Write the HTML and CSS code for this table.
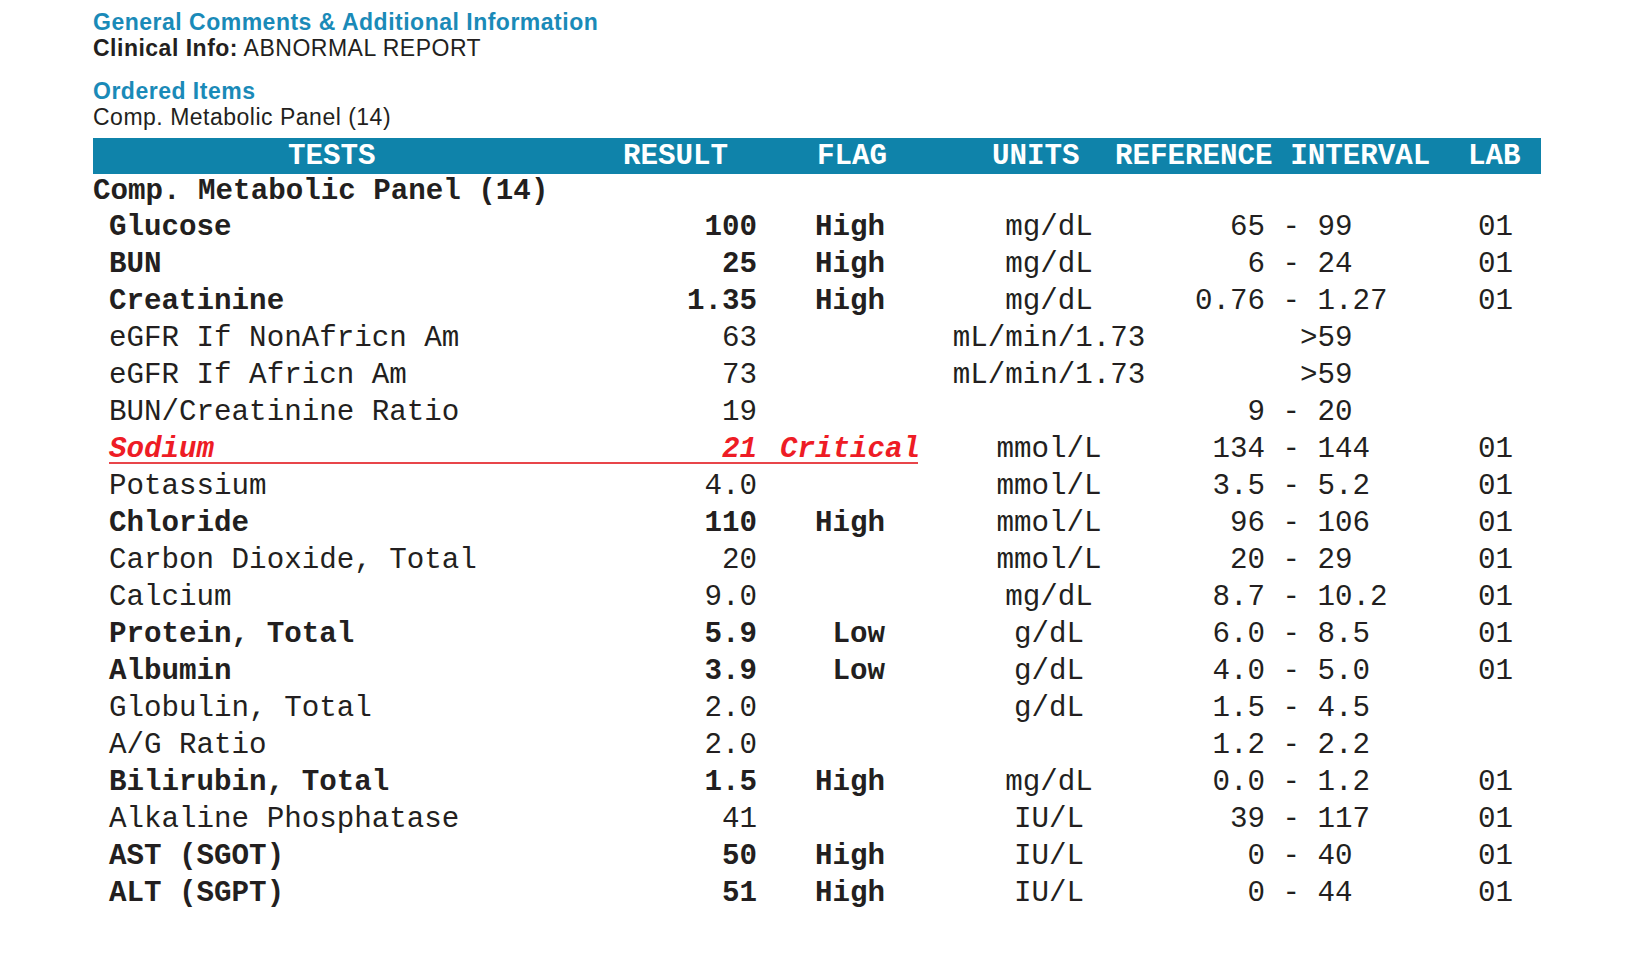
FILE: index.html
```html
<!DOCTYPE html>
<html lang="en">
<head>
<meta charset="utf-8">
<title>Lab Report</title>
<link rel="stylesheet" href="styles.css">
</head>
<body>
<div class="page">
  <section class="info">
    <h2 class="section-title">General Comments &amp; Additional Information</h2>
    <p class="line"><b>Clinical Info:</b> ABNORMAL REPORT</p>
    <h2 class="section-title ordered">Ordered Items</h2>
    <p class="line">Comp. Metabolic Panel (14)</p>
  </section>

  <div class="results">
    <div class="thead">
      <span class="th th-tests">TESTS</span>
      <span class="th th-result">RESULT</span>
      <span class="th th-flag">FLAG</span>
      <span class="th th-units">UNITS</span>
      <span class="th th-ref">REFERENCE INTERVAL</span>
      <span class="th th-lab">LAB</span>
    </div>

    <div class="panel-name">Comp. Metabolic Panel (14)</div>

    <div class="row bold">
      <div class="main"><span class="name">Glucose</span><span class="result">100</span><span class="flag">  High</span></div>
      <span class="units">mg/dL</span>
      <span class="ref"><span class="lo">65</span><span class="dash"> - </span><span class="hi">99</span></span>
      <span class="lab">01</span>
    </div>
    <div class="row bold">
      <div class="main"><span class="name">BUN</span><span class="result">25</span><span class="flag">  High</span></div>
      <span class="units">mg/dL</span>
      <span class="ref"><span class="lo">6</span><span class="dash"> - </span><span class="hi">24</span></span>
      <span class="lab">01</span>
    </div>
    <div class="row bold">
      <div class="main"><span class="name">Creatinine</span><span class="result">1.35</span><span class="flag">  High</span></div>
      <span class="units">mg/dL</span>
      <span class="ref"><span class="lo">0.76</span><span class="dash"> - </span><span class="hi">1.27</span></span>
      <span class="lab">01</span>
    </div>
    <div class="row">
      <div class="main"><span class="name">eGFR If NonAfricn Am</span><span class="result">63</span><span class="flag"></span></div>
      <span class="units">mL/min/1.73</span>
      <span class="ref"><span class="lo"></span><span class="open">  &gt;59</span></span>
      <span class="lab"></span>
    </div>
    <div class="row">
      <div class="main"><span class="name">eGFR If Africn Am</span><span class="result">73</span><span class="flag"></span></div>
      <span class="units">mL/min/1.73</span>
      <span class="ref"><span class="lo"></span><span class="open">  &gt;59</span></span>
      <span class="lab"></span>
    </div>
    <div class="row">
      <div class="main"><span class="name">BUN/Creatinine Ratio</span><span class="result">19</span><span class="flag"></span></div>
      <span class="units"></span>
      <span class="ref"><span class="lo">9</span><span class="dash"> - </span><span class="hi">20</span></span>
      <span class="lab"></span>
    </div>
    <div class="row critical">
      <div class="main"><span class="name">Sodium</span><span class="result">21</span><span class="flag">Critical</span></div>
      <span class="units">mmol/L</span>
      <span class="ref"><span class="lo">134</span><span class="dash"> - </span><span class="hi">144</span></span>
      <span class="lab">01</span>
    </div>
    <div class="row">
      <div class="main"><span class="name">Potassium</span><span class="result">4.0</span><span class="flag"></span></div>
      <span class="units">mmol/L</span>
      <span class="ref"><span class="lo">3.5</span><span class="dash"> - </span><span class="hi">5.2</span></span>
      <span class="lab">01</span>
    </div>
    <div class="row bold">
      <div class="main"><span class="name">Chloride</span><span class="result">110</span><span class="flag">  High</span></div>
      <span class="units">mmol/L</span>
      <span class="ref"><span class="lo">96</span><span class="dash"> - </span><span class="hi">106</span></span>
      <span class="lab">01</span>
    </div>
    <div class="row">
      <div class="main"><span class="name">Carbon Dioxide, Total</span><span class="result">20</span><span class="flag"></span></div>
      <span class="units">mmol/L</span>
      <span class="ref"><span class="lo">20</span><span class="dash"> - </span><span class="hi">29</span></span>
      <span class="lab">01</span>
    </div>
    <div class="row">
      <div class="main"><span class="name">Calcium</span><span class="result">9.0</span><span class="flag"></span></div>
      <span class="units">mg/dL</span>
      <span class="ref"><span class="lo">8.7</span><span class="dash"> - </span><span class="hi">10.2</span></span>
      <span class="lab">01</span>
    </div>
    <div class="row bold">
      <div class="main"><span class="name">Protein, Total</span><span class="result">5.9</span><span class="flag">   Low</span></div>
      <span class="units">g/dL</span>
      <span class="ref"><span class="lo">6.0</span><span class="dash"> - </span><span class="hi">8.5</span></span>
      <span class="lab">01</span>
    </div>
    <div class="row bold">
      <div class="main"><span class="name">Albumin</span><span class="result">3.9</span><span class="flag">   Low</span></div>
      <span class="units">g/dL</span>
      <span class="ref"><span class="lo">4.0</span><span class="dash"> - </span><span class="hi">5.0</span></span>
      <span class="lab">01</span>
    </div>
    <div class="row">
      <div class="main"><span class="name">Globulin, Total</span><span class="result">2.0</span><span class="flag"></span></div>
      <span class="units">g/dL</span>
      <span class="ref"><span class="lo">1.5</span><span class="dash"> - </span><span class="hi">4.5</span></span>
      <span class="lab"></span>
    </div>
    <div class="row">
      <div class="main"><span class="name">A/G Ratio</span><span class="result">2.0</span><span class="flag"></span></div>
      <span class="units"></span>
      <span class="ref"><span class="lo">1.2</span><span class="dash"> - </span><span class="hi">2.2</span></span>
      <span class="lab"></span>
    </div>
    <div class="row bold">
      <div class="main"><span class="name">Bilirubin, Total</span><span class="result">1.5</span><span class="flag">  High</span></div>
      <span class="units">mg/dL</span>
      <span class="ref"><span class="lo">0.0</span><span class="dash"> - </span><span class="hi">1.2</span></span>
      <span class="lab">01</span>
    </div>
    <div class="row">
      <div class="main"><span class="name">Alkaline Phosphatase</span><span class="result">41</span><span class="flag"></span></div>
      <span class="units">IU/L</span>
      <span class="ref"><span class="lo">39</span><span class="dash"> - </span><span class="hi">117</span></span>
      <span class="lab">01</span>
    </div>
    <div class="row bold">
      <div class="main"><span class="name">AST (SGOT)</span><span class="result">50</span><span class="flag">  High</span></div>
      <span class="units">IU/L</span>
      <span class="ref"><span class="lo">0</span><span class="dash"> - </span><span class="hi">40</span></span>
      <span class="lab">01</span>
    </div>
    <div class="row bold">
      <div class="main"><span class="name">ALT (SGPT)</span><span class="result">51</span><span class="flag">  High</span></div>
      <span class="units">IU/L</span>
      <span class="ref"><span class="lo">0</span><span class="dash"> - </span><span class="hi">44</span></span>
      <span class="lab">01</span>
    </div>
  </div>
</div>
</body>
</html>
```

FILE: styles.css
```css
html, body {
  margin: 0;
  padding: 0;
  background: #ffffff;
  color: #231f20;
}

.page {
  margin-left: 93px;
  width: 1448px;
  padding-top: 9px;
}

/* ---------- info block ---------- */
.info {
  font-family: "Liberation Sans", Arial, sans-serif;
  font-size: 23px;
  letter-spacing: 0.5px;
  line-height: 26px;
}

.section-title {
  margin: 0;
  font-size: 23px;
  font-weight: bold;
  color: #1a8ab8;
}

.section-title.ordered {
  margin-top: 17px;
}

.line {
  margin: 0;
}

/* ---------- results table ---------- */
.results {
  margin-top: 8px;
  font-family: "Courier New", "Nimbus Mono PS", "Nimbus Mono L", "FreeMono", "Liberation Mono", monospace;
  font-size: 29.2px;
}

.thead {
  display: flex;
  height: 35px;
  padding-top: 1px;
  line-height: 36px;
  padding-left: 195px;
  background: #0f83aa;
  color: #ffffff;
  font-weight: bold;
  white-space: pre;
}

.th-tests  { width: 335px; }
.th-result { width: 194px; }
.th-flag   { width: 175px; }
.th-units  { width: 123px; }
.th-ref    { width: 353px; }
.th-lab    { flex: 1; }

.panel-name {
  margin-top: 1px;
  height: 34px;
  line-height: 34px;
  font-weight: bold;
  white-space: pre;
}

.row {
  display: flex;
  height: 37px;
  line-height: 37px;
  white-space: pre;
}

.main {
  display: flex;
  margin-left: 16px;
  width: 809px;
  height: 33px;
  box-sizing: border-box;
}

.name {
  width: 528px;
}

.result {
  width: 120px;
  text-align: right;
}

.flag {
  margin-left: 23px;
  width: 138px;
}

.units {
  width: 262px;
  text-align: center;
}

.ref {
  display: flex;
  width: 298px;
}

.lo {
  width: 85px;
  text-align: right;
}

.dash {
  width: 52.5px;
}

.row.bold .main {
  font-weight: bold;
}

.row.critical .main {
  color: #ee1c25;
  font-weight: bold;
  font-style: italic;
  border-bottom: 2px solid #e8454a;
}
```
